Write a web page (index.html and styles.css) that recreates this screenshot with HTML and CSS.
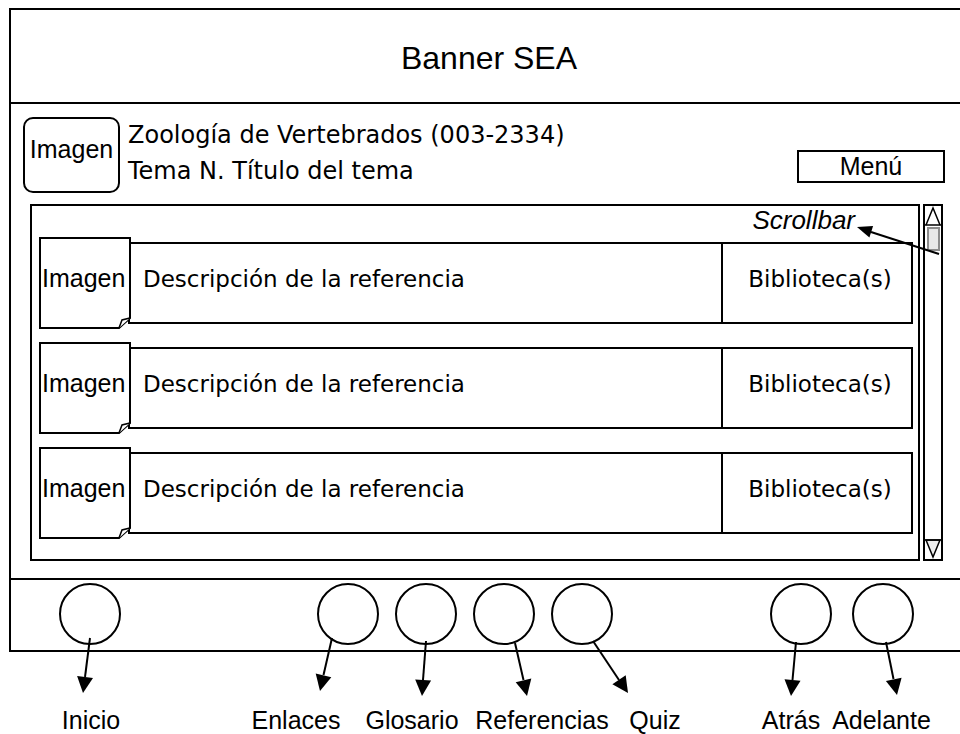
FILE: index.html
```html
<!DOCTYPE html>
<html lang="es">
<head>
    <meta charset="UTF-8">
    <meta name="viewport" content="width=device-width, initial-scale=1.0">
    <title>Banner SEA</title>
    <link rel="stylesheet" href="styles.css">
</head>
<body>
<div class="page">
    <div class="frame">
        <div class="banner">Banner SEA</div>

        <div class="course">
            <div class="logo">Imagen</div>
            <div class="course-title">
                <div>Zoología de Vertebrados (003-2334)</div>
                <div>Tema N. Título del tema</div>
            </div>
            <div class="menu-btn">Menú</div>
        </div>

        <div class="viewer">
            <div class="ref-list">
                <div class="caption">Scrollbar</div>

                <div class="ref">
                    <div class="ref-img">
                        <svg class="doc" viewBox="0 0 92 92" width="92" height="92">
                            <path d="M1 1 H91 V81 L80 91 H1 Z" fill="#fff" stroke="#000" stroke-width="2"/>
                            <path d="M80 91 L83 83 L91 81" fill="#fff" stroke="#000" stroke-width="1.5"/>
                        </svg>
                        <span>Imagen</span>
                    </div>
                    <div class="ref-box">
                        <div class="ref-desc">Descripción de la referencia</div>
                        <div class="ref-lib">Biblioteca(s)</div>
                    </div>
                </div>

                <div class="ref">
                    <div class="ref-img">
                        <svg class="doc" viewBox="0 0 92 92" width="92" height="92">
                            <path d="M1 1 H91 V81 L80 91 H1 Z" fill="#fff" stroke="#000" stroke-width="2"/>
                            <path d="M80 91 L83 83 L91 81" fill="#fff" stroke="#000" stroke-width="1.5"/>
                        </svg>
                        <span>Imagen</span>
                    </div>
                    <div class="ref-box">
                        <div class="ref-desc">Descripción de la referencia</div>
                        <div class="ref-lib">Biblioteca(s)</div>
                    </div>
                </div>

                <div class="ref">
                    <div class="ref-img">
                        <svg class="doc" viewBox="0 0 92 92" width="92" height="92">
                            <path d="M1 1 H91 V81 L80 91 H1 Z" fill="#fff" stroke="#000" stroke-width="2"/>
                            <path d="M80 91 L83 83 L91 81" fill="#fff" stroke="#000" stroke-width="1.5"/>
                        </svg>
                        <span>Imagen</span>
                    </div>
                    <div class="ref-box">
                        <div class="ref-desc">Descripción de la referencia</div>
                        <div class="ref-lib">Biblioteca(s)</div>
                    </div>
                </div>
            </div>

            <div class="scrollbar">
                <svg class="sb-btn" viewBox="0 0 16 20" width="16" height="20">
                    <path d="M0 19 H16" stroke="#000" stroke-width="1.5"/>
                    <path d="M1 19 L8 2 L15 19" fill="none" stroke="#000" stroke-width="1.5"/>
                </svg>
                <div class="sb-thumb"></div>
                <div class="sb-track"></div>
                <svg class="sb-btn" viewBox="0 0 16 20" width="16" height="20">
                    <path d="M1 1 L8 18 L15 1 Z" fill="#eee" stroke="#000" stroke-width="1.5"/>
                    <path d="M0 1 H16" stroke="#000" stroke-width="1.5"/>
                </svg>
            </div>
        </div>

        <div class="nav">
            <div class="nav-group">
                <span class="nav-btn"></span>
            </div>
            <div class="nav-group mid">
                <span class="nav-btn"></span>
                <span class="nav-btn"></span>
                <span class="nav-btn"></span>
                <span class="nav-btn"></span>
            </div>
            <div class="nav-group end">
                <span class="nav-btn"></span>
                <span class="nav-btn"></span>
            </div>
        </div>
    </div>

    <div class="labels">
        <span class="lbl lbl-inicio">Inicio</span>
        <span class="lbl lbl-enlaces">Enlaces</span>
        <span class="lbl lbl-glosario">Glosario</span>
        <span class="lbl lbl-referencias">Referencias</span>
        <span class="lbl lbl-quiz">Quiz</span>
        <span class="lbl lbl-atras">Atrás</span>
        <span class="lbl lbl-adelante">Adelante</span>
    </div>

    <!-- callout arrows drawn over the wireframe -->
    <svg class="arrows" viewBox="0 0 960 734" width="960" height="734">
        <g stroke="#000" stroke-width="2" fill="none">
            <path d="M939 246 L871 224"/>
            <path d="M90 630 L85 669"/>
            <path d="M332 630 L323.5 667"/>
            <path d="M426 633 L423 672"/>
            <path d="M515 635 L523.5 672"/>
            <path d="M593 633 L619 672"/>
            <path d="M796 634 L792.5 672"/>
            <path d="M886 634 L893.5 671"/>
        </g>
        <g fill="#000">
            <polygon points="857,219 873.1,218 869.4,229.4"/>
            <polygon points="83,685 77.1,668.1 93,670.1"/>
            <polygon points="320,683 315.7,665.6 331.3,669.2"/>
            <polygon points="422,688 415.2,671.5 431.1,672.6"/>
            <polygon points="527,688 515.7,674.2 531.3,670.6"/>
            <polygon points="628,685 612.4,676.2 625.7,667.3"/>
            <polygon points="791,688 784.5,671.3 800.5,672.8"/>
            <polygon points="897,687 885.9,673 901.6,669.7"/>
        </g>
    </svg>
</div>
</body>
</html>
```

FILE: styles.css
```css
*{
    box-sizing: border-box;
}
html, body{
    margin: 0;
    overflow: hidden;
    background: #fff;
}
body{
    font-family: "Liberation Sans", Arial, sans-serif;
    color: #000;
}
.page{
    position: relative;
    width: 960px;
    height: 734px;
}
.frame{
    margin: 8px 0 0 9px;
    width: 960px;
    border: 2px solid #000;
}

/* banner */
.banner{
    height: 94px;
    border-bottom: 2px solid #000;
    display: flex;
    align-items: center;
    justify-content: center;
    padding-top: 5px;
    font-size: 32px;
}

/* course header */
.course{
    height: 100px;
    display: flex;
    align-items: flex-start;
    padding-left: 12px;
}
.logo{
    width: 97px;
    height: 76px;
    margin-top: 13px;
    border: 2px solid #000;
    border-radius: 10px;
    display: flex;
    align-items: center;
    justify-content: center;
    padding-bottom: 12px;
    font-size: 25px;
}
.course-title{
    margin: 13px 0 0 8px;
    font-family: "DejaVu Sans", Verdana, sans-serif;
    font-size: 24px;
    line-height: 36px;
}
.menu-btn{
    margin: 46px 22px 0 auto;
    width: 148px;
    height: 33px;
    border: 2px solid #000;
    display: flex;
    align-items: center;
    justify-content: center;
    font-size: 25px;
}

/* reference list + scrollbar */
.viewer{
    display: flex;
    gap: 3px;
    margin-left: 19px;
    height: 357px;
}
.ref-list{
    width: 890px;
    border: 2px solid #000;
    display: flex;
    flex-direction: column;
    gap: 13px;
}
.caption{
    height: 31px;
    margin-bottom: -13px;
    text-align: right;
    padding-right: 63px;
    font-style: italic;
    font-size: 26px;
    line-height: 28px;
}
.ref{
    display: flex;
    align-items: center;
    padding: 0 5px 0 7px;
}
.ref-img{
    position: relative;
    z-index: 1;
    flex: none;
    width: 92px;
    height: 92px;
    display: flex;
    align-items: center;
    padding: 0 0 9px 3px;
    font-size: 25px;
}
.ref-img .doc{
    position: absolute;
    left: 0;
    top: 0;
    z-index: -1;
}
.ref-box{
    flex: 1;
    height: 82px;
    margin-left: -3px;
    border: 2px solid #000;
    display: flex;
    font-family: "DejaVu Sans", Verdana, sans-serif;
    font-size: 23px;
}
.ref-desc{
    flex: 1;
    display: flex;
    align-items: center;
    padding: 0 0 9px 13px;
}
.ref-lib{
    width: 190px;
    border-left: 2px solid #000;
    display: flex;
    align-items: center;
    justify-content: center;
    padding: 0 0 9px 6px;
}
.scrollbar{
    width: 20px;
    border: 2px solid #000;
    display: flex;
    flex-direction: column;
}
.sb-btn{
    display: block;
    flex: none;
}
.sb-thumb{
    height: 24px;
    margin: 1px 1px 0 2px;
    background: #e8e8e8;
    border: 2px solid #8c8c8c;
}
.sb-track{
    flex: 1;
}

/* bottom navigation */
.nav{
    margin-top: 17px;
    height: 72px;
    border-top: 2px solid #000;
    display: flex;
    align-items: flex-start;
    padding: 3px 0 0 48px;
}
.nav-group{
    display: flex;
    gap: 16px;
}
.nav-group.mid{
    margin-left: 196px;
}
.nav-group.end{
    margin-left: 157px;
    gap: 20px;
}
.nav-btn{
    width: 62px;
    height: 62px;
    border: 2px solid #000;
    border-radius: 50%;
}

/* labels under the frame */
.labels{
    display: flex;
    margin-top: 53px;
    font-size: 25px;
    line-height: 30px;
}
.lbl{
    flex: none;
    width: 140px;
    text-align: center;
    white-space: nowrap;
}
.lbl-inicio{ margin-left: 21px; }
.lbl-enlaces{ margin-left: 65px; }
.lbl-glosario{ margin-left: -24px; }
.lbl-referencias{ margin-left: -10px; }
.lbl-quiz{ margin-left: -27px; }
.lbl-atras{ margin-left: -4px; }
.lbl-adelante{ margin-left: -49.5px; }

.arrows{
    position: absolute;
    left: 0;
    top: 0;
    pointer-events: none;
}
```
